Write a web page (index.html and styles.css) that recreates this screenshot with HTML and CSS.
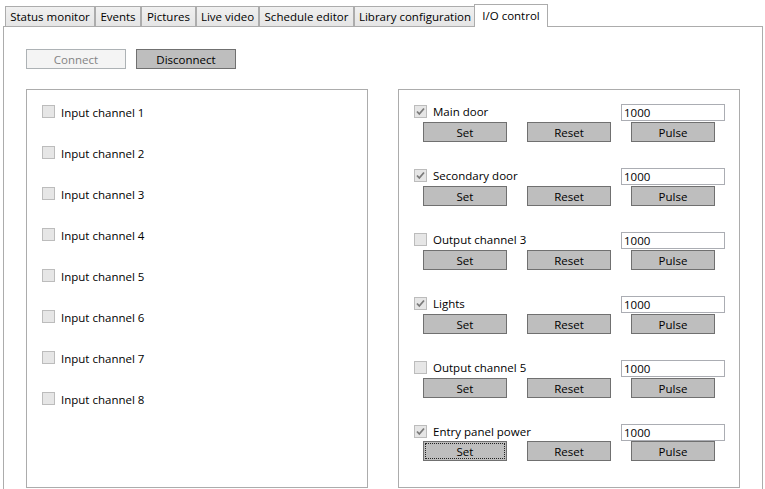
FILE: index.html
```html
<!DOCTYPE html>
<html>
<head>
<meta charset="utf-8">
<link rel="stylesheet" href="styles.css">
</head>
<body>
<div class="tabs">
  <div class="tab t1">Status monitor</div>
  <div class="tab t2">Events</div>
  <div class="tab t3">Pictures</div>
  <div class="tab t4">Live video</div>
  <div class="tab t5">Schedule editor</div>
  <div class="tab t6">Library configuration</div>
  <div class="tab sel">I/O control</div>
</div>
<div class="panel">
  <div class="actions">
    <div class="btn wide disabled">Connect</div>
    <div class="btn wide">Disconnect</div>
  </div>
  <div class="groups">
    <div class="group inputs">
      <div class="in-row"><span class="cb"></span><span>Input channel 1</span></div>
      <div class="in-row"><span class="cb"></span><span>Input channel 2</span></div>
      <div class="in-row"><span class="cb"></span><span>Input channel 3</span></div>
      <div class="in-row"><span class="cb"></span><span>Input channel 4</span></div>
      <div class="in-row"><span class="cb"></span><span>Input channel 5</span></div>
      <div class="in-row"><span class="cb"></span><span>Input channel 6</span></div>
      <div class="in-row"><span class="cb"></span><span>Input channel 7</span></div>
      <div class="in-row"><span class="cb"></span><span>Input channel 8</span></div>
    </div>
    <div class="group outputs">
      <div class="out-row">
        <div class="out-head">
          <span class="cb"><svg viewBox="0 0 11 11" width="11" height="11"><path d="M2 5.5 L4.3 8 L9 2.5" fill="none" stroke="#7a7a7a" stroke-width="1.8"/></svg></span>
          <span class="lbl">Main door</span>
          <span class="tb">1000</span>
        </div>
        <div class="out-btns"><div class="btn">Set</div><div class="btn">Reset</div><div class="btn">Pulse</div></div>
      </div>
      <div class="out-row">
        <div class="out-head">
          <span class="cb"><svg viewBox="0 0 11 11" width="11" height="11"><path d="M2 5.5 L4.3 8 L9 2.5" fill="none" stroke="#7a7a7a" stroke-width="1.8"/></svg></span>
          <span class="lbl">Secondary door</span>
          <span class="tb">1000</span>
        </div>
        <div class="out-btns"><div class="btn">Set</div><div class="btn">Reset</div><div class="btn">Pulse</div></div>
      </div>
      <div class="out-row">
        <div class="out-head">
          <span class="cb"></span>
          <span class="lbl">Output channel 3</span>
          <span class="tb">1000</span>
        </div>
        <div class="out-btns"><div class="btn">Set</div><div class="btn">Reset</div><div class="btn">Pulse</div></div>
      </div>
      <div class="out-row">
        <div class="out-head">
          <span class="cb"><svg viewBox="0 0 11 11" width="11" height="11"><path d="M2 5.5 L4.3 8 L9 2.5" fill="none" stroke="#7a7a7a" stroke-width="1.8"/></svg></span>
          <span class="lbl">Lights</span>
          <span class="tb">1000</span>
        </div>
        <div class="out-btns"><div class="btn">Set</div><div class="btn">Reset</div><div class="btn">Pulse</div></div>
      </div>
      <div class="out-row">
        <div class="out-head">
          <span class="cb"></span>
          <span class="lbl">Output channel 5</span>
          <span class="tb">1000</span>
        </div>
        <div class="out-btns"><div class="btn">Set</div><div class="btn">Reset</div><div class="btn">Pulse</div></div>
      </div>
      <div class="out-row last">
        <div class="out-head">
          <span class="cb"><svg viewBox="0 0 11 11" width="11" height="11"><path d="M2 5.5 L4.3 8 L9 2.5" fill="none" stroke="#7a7a7a" stroke-width="1.8"/></svg></span>
          <span class="lbl">Entry panel power</span>
          <span class="tb">1000</span>
        </div>
        <div class="out-btns"><div class="btn focus">Set</div><div class="btn">Reset</div><div class="btn">Pulse</div></div>
      </div>
    </div>
  </div>
</div>
</body>
</html>
```
FILE: styles.css
```css
html, body {
  margin: 0;
  padding: 0;
  background: #ffffff;
  overflow: hidden;
}
body {
  font-family: "Open Sans", "Noto Sans", sans-serif;
  font-size: 11.5px;
  color: #000000;
  width: 765px;
  height: 489px;
}
.tabs {
  display: flex;
  align-items: flex-end;
  height: 26px;
  padding-left: 5px;
  position: relative;
  z-index: 1;
}
.tab {
  box-sizing: border-box;
  height: 20px;
  border: 1px solid #acacac;
  border-bottom: none;
  background: linear-gradient(#f0f0f0, #e5e5e5);
  display: flex;
  align-items: center;
  justify-content: center;
  white-space: nowrap;
  flex: none;
}
.t1 { width: 90px; }
.t2 { width: 46px; }
.t3 { width: 55px; }
.t4 { width: 63px; }
.t5 { width: 95px; }
.t6 { width: 122px; }
.tab.sel {
  width: 74px;
  height: 23px;
  margin: 0 -2px -1px;
  background: #ffffff;
  padding-bottom: 2px;
}
.panel {
  box-sizing: border-box;
  margin: 0 2px 0 3px;
  height: 480px;
  border: 1px solid #acacac;
  padding: 22px 0 0 22px;
}
.actions {
  display: flex;
  gap: 10px;
  height: 20px;
}
.btn {
  box-sizing: border-box;
  height: 20px;
  border: 1px solid #707070;
  background: #bebebe;
  display: flex;
  align-items: center;
  justify-content: center;
  position: relative;
  flex: none;
}
.btn.wide { width: 100px; }
.btn.disabled {
  background: #f4f4f4;
  border-color: #adb2b5;
  color: #838383;
}
.btn.focus::after {
  content: "";
  position: absolute;
  inset: 1px;
  border: 1px dotted #222222;
}
.groups {
  display: flex;
  gap: 30px;
  margin-top: 20px;
}
.group {
  box-sizing: border-box;
  width: 342px;
  height: 399px;
  border: 1px solid #acacac;
}
.inputs {
  padding: 15px 0 0 15px;
}
.in-row {
  display: flex;
  align-items: center;
  gap: 6px;
  height: 13px;
  margin-bottom: 28px;
  white-space: nowrap;
}
.in-row span:last-child {
  position: relative;
  top: 1px;
}
.cb {
  box-sizing: border-box;
  width: 13px;
  height: 13px;
  border: 1px solid #bcbcbc;
  background: #e6e6e6;
  flex: none;
  display: flex;
}
.cb svg { display: block; }
.outputs {
  padding: 14px 14px 0 15px;
}
.out-row {
  height: 38px;
  margin-bottom: 26px;
}
.out-head {
  display: flex;
  align-items: flex-start;
  height: 17px;
}
.out-head .cb { margin-top: 1px; }
.lbl {
  margin-left: 6px;
  margin-top: 1px;
  line-height: 14px;
  white-space: nowrap;
}
.tb {
  margin-left: auto;
  box-sizing: border-box;
  width: 104px;
  height: 17px;
  border: 1px solid #abadb3;
  background: #ffffff;
  padding-left: 2px;
  display: flex;
  align-items: center;
}
.out-btns {
  display: flex;
  gap: 20px;
  padding-left: 9px;
  margin-top: 1px;
}
.out-row.last .out-btns { margin-top: 0; }
.out-btns .btn { width: 84px; }
```
